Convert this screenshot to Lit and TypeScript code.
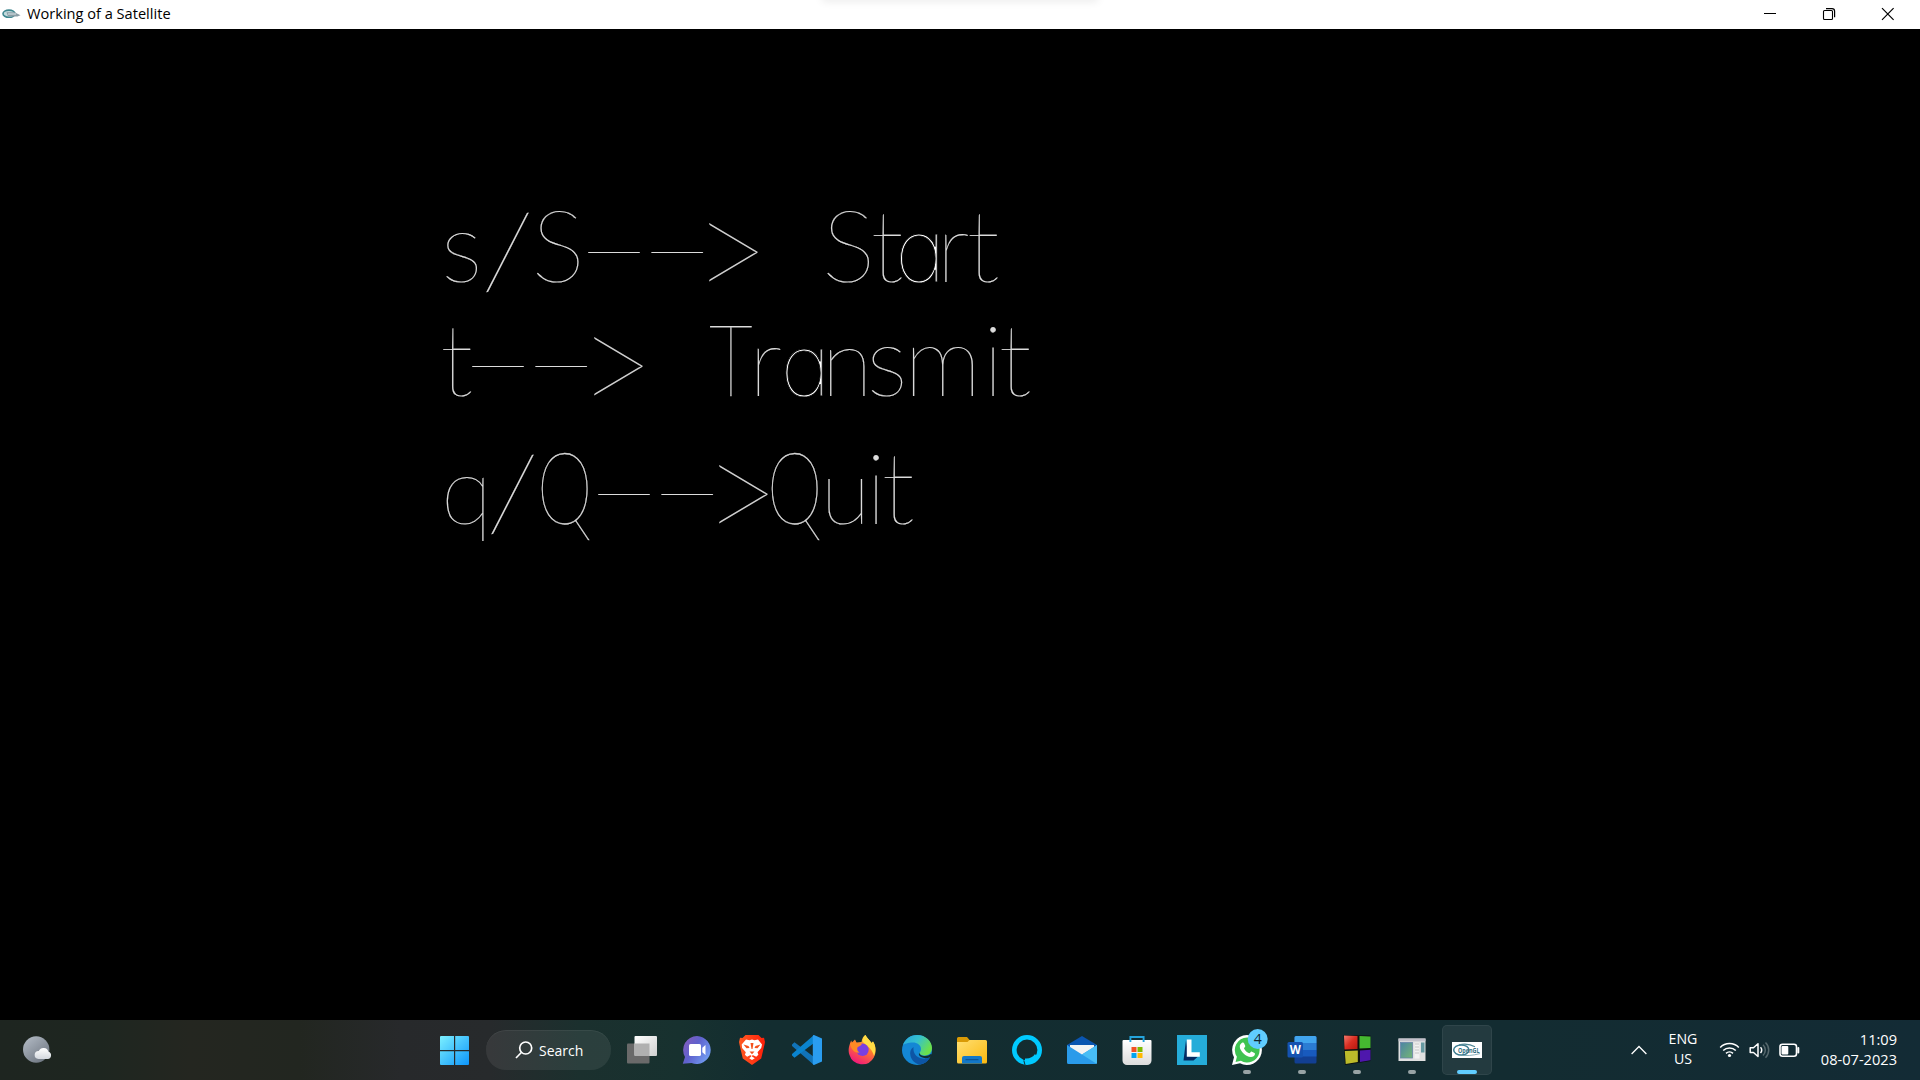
import { LitElement, html, svg, css, nothing, TemplateResult } from "lit";
import { customElement, property } from "lit/decorators.js";

/* One character: glyph, pen x, font size, baseline offset, optional alternate face. */
type Glyph = [string, number, number, number?, string?];
interface Run {
  glyphs: Glyph[];
}
/* A stretched run is drawn from its own origin with a horizontal scale. */
interface Stretched {
  text: string;
  x: number;
  kind: string;
}
interface Row {
  base: number;
  parts: (Run | Stretched)[];
}

const kinds: Record<string, { scale: number; dy: number }> = {
  dash: { scale: 2.33, dy: 0 },
  slash: { scale: 1.2, dy: 5.6 },
  arrow: { scale: 0.86, dy: 21.6 },
  capT: { scale: 0.76, dy: 0 },
  capQ: { scale: 0.7, dy: 0 },
};

const rows: Row[] = [
  {
    base: 282,
    parts: [
      { glyphs: [["s", 441, 99]] },
      { text: "/", x: 481, kind: "slash" },
      { glyphs: [["S", 531.5, 101]] },
      { text: "--", x: 571, kind: "dash" },
      { text: ">", x: 693, kind: "arrow" },
      { glyphs: [["S", 822, 101], ["t", 870.5, 101], ["a", 895, 87, 0, "round"], ["r", 936.5, 96], ["t", 966.5, 101]] },
    ],
  },
  {
    base: 396,
    parts: [
      { glyphs: [["t", 440, 101]] },
      { text: "--", x: 455, kind: "dash" },
      { text: ">", x: 578, kind: "arrow" },
      { text: "T", x: 709, kind: "capT" },
      {
        glyphs: [
          ["r", 749, 96], ["a", 780.5, 86, 0, "round"], ["n", 821.5, 94], ["s", 866.5, 98],
          ["m", 904, 98], ["i", 982.7, 99], ["t", 998.5, 101],
        ],
      },
    ],
  },
  {
    base: 524,
    parts: [
      { glyphs: [["q", 441, 94]] },
      { text: "/", x: 486, kind: "slash" },
      { text: "Q", x: 537, kind: "capQ" },
      { text: "--", x: 581, kind: "dash" },
      { text: ">", x: 703, kind: "arrow" },
      { text: "Q", x: 767, kind: "capQ" },
      { glyphs: [["u", 820.6, 92], ["i", 865.7, 99], ["t", 881.5, 101]] },
    ],
  },
];

@customElement("gl-canvas")
export class GlCanvas extends LitElement {
  static styles = css`
    :host { display: block; background: #000; overflow: hidden; }
    svg { display: block; }
    text { font-family: Lato, sans-serif; font-weight: 100; fill: #dcdcdc; stroke: #dcdcdc; stroke-width: 0.15px; white-space: pre; }
    .round { font-family: Inter, sans-serif; font-feature-settings: "cv11"; stroke: #000; stroke-width: 0.8px; fill: #fff; }
    .dash { font-size: 100px; letter-spacing: -9.8px; }
    .slash { font-size: 105px; }
    .arrow { font-size: 154px; stroke-width: 0; fill: #cfcfcf; }
    .capT, .capQ { font-size: 101px; stroke-width: 0.3px; }
  `;

  private part(p: Run | Stretched, base: number) {
    if ("glyphs" in p) {
      return svg`<text>${p.glyphs.map(
        ([ch, x, size, dy = 0, face]) =>
          svg`<tspan class=${face ?? nothing} x=${x} y=${base + dy} font-size=${size}>${ch}</tspan>`
      )}</text>`;
    }
    const k = kinds[p.kind];
    return svg`<text class=${p.kind} transform="translate(${p.x} ${base + k.dy}) scale(${k.scale} 1)">${p.text}</text>`;
  }

  render() {
    return html`<svg width="1920" height="991" viewBox="0 29 1920 991">
      ${rows.map((r) => r.parts.map((p) => this.part(p, r.base)))}
    </svg>`;
  }
}

@customElement("title-bar")
export class TitleBar extends LitElement {
  static styles = css`
    :host { display: flex; align-items: center; height: 29px; background: #fff; position: relative; overflow: hidden; }
    .logo { width: 19px; height: 12px; margin: 0 6px 2px 2px; }
    .title { flex: 1; font-size: 14.6px; line-height: 27px; padding-bottom: 2px; color: #000; }
    .controls { display: flex; height: 29px; }
    .controls svg { width: 58px; height: 29px; }
    .controls svg:nth-child(n + 2) { margin-left: 0.4px; }
    .shade { position: absolute; left: 822px; top: -6px; width: 276px; height: 6px; box-shadow: 0 1px 8px rgba(0, 0, 0, 0.1); }
  `;
  render() {
    return html`
      <svg class="logo" viewBox="0 0 19 12">
        <ellipse cx="7" cy="5.700" rx="6" ry="3.600" fill="#c3dadd" stroke="#3f8790" stroke-width="1.600" />
        <path d="M4.500 4.200h8l6 3-3 1.300H6z" fill="#8b9ea6" /><path d="M6 6h8" stroke="#dbe7ea" />
      </svg>
      <span class="title">Working of a Satellite</span>
      <div class="controls">
        <svg viewBox="0 0 58 29"><path d="M19 13.500h12" stroke="#000" /></svg>
        <svg viewBox="0 0 58 29" fill="none" stroke="#000">
          <rect x="19.500" y="10.500" width="9" height="9" rx="1" stroke-width="1.100" />
          <path d="M22 8.600h6a2.600 2.600 0 0 1 2.600 2.600v6" stroke-width="1.200" />
        </svg>
        <svg viewBox="0 0 58 29"><path d="M20 8.200l11.600 11.600M31.600 8.200L20 19.800" stroke="#000" stroke-width="1.200" /></svg>
      </div>
      <div class="shade"></div>`;
  }
}

const icons: Record<string, TemplateResult> = {
  taskview: svg`<rect x="0" y="8.5" width="22.5" height="20" rx="1" fill="#6a6a6a"/>
    <rect x="7.5" y="1" width="22.5" height="20" rx="1" fill="url(#tv)"/>
    <path d="M7.5 8.5h15V21h-14a1 1 0 0 1-1-1z" fill="#b0b0b0"/>`,
  chat: svg`<path d="M15 1a14 14 0 1 1-5.5 27L.8 28.7 3 22A14 14 0 0 1 15 1z" fill="url(#ch)"/>
    <rect x="7" y="9" width="12" height="12" rx="1.6" fill="#fff"/><path d="M20.3 12.7l3.2-2.8v10.2l-3.2-2.8z" fill="#fff"/>`,
  brave: svg`<path d="M8.500 0h13l3 3 2.500-.2L28 7l-.6 3-3.200 13.500L15 30l-9.200-6.500L2.600 10 2 7l1-4.200 2.500.2z" fill="url(#br)"/>
    <path d="M9 4.500l3.500.8 2.500-.7 2.500.7 3.500-.8 4 5-.8 3.500-3.700 4.200.9 2.600-2.200 2-3-1.600-1.200.4v1l2.800 1.600L15 25l-2.800-1.800 2.100-1.600v-1l-1.200-.4-3 1.600-2.200-2 .9-2.600-3.700-4.200L4.700 9.500z" fill="#fff"/>
    <path d="M6.500 9.500l5 1.500 1 2-3 .2zM23.500 9.500l-5 1.500-1 2 3 .2zM12.500 16.500h5L15 19.200zM13.500 8h3l-1 6h-1z" fill="#f4511e"/>`,
  vscode: svg`<path d="M2.500 7.200L22 22v8L.6 11.500a1.500 1.500 0 0 1 0-2.500z" fill="#1173b8"/>
    <path d="M2.500 22.800L22 8V0L.6 18.500a1.500 1.500 0 0 0 0 2.500z" fill="#0a84cf"/>
    <path d="M22 0l8 3.500v23L22 30c-.8 0-1.200-.6-1.200-1.400V1.400C20.800.6 21.200 0 22 0z" fill="#2a9df0"/>`,
  firefox: svg`<path d="M18.500 0c1 3 4.500 5 6 8l1.500-1.500c3.500 5 3.200 12 .8 16A13.300 13.300 0 0 1 2.500 20C.8 15 2 10.500 4.200 5.500l.8 2L8 4.500l1.500 3 5-.5c.5-3.500 2-6 4-7z" fill="url(#ff)"/>
    <path d="M18.500 0c1 3 4.500 5 6 8l1.500-1.500c3 4.500 3 10 1 14.500-1-4-3-7-6-9.500-2.500-2.500-5.500-4-5.500-6C16 3 17.200.8 18.500 0z" fill="#ffdc45"/>
    <circle cx="15.500" cy="14.800" r="6.200" fill="#7a3fe0"/>
    <path d="M3 8.500c3-1.800 5.500-1.800 7.500 0l4.500.3c-1 2-2.500 2.500-4.300 3.200-1 2-.4 4.500 2 5.500-5 1-8.700-3-9.700-9z" fill="#ff8a24"/>`,
  edge: svg`<circle cx="15" cy="15" r="15" fill="#1487d4"/>
    <path d="M1 10C3 4 8.500 0 15 0c9 0 15 6.500 15 13 0 5-3.500 7.500-7.500 7.500-3 0-5-1-5-2.200 0-1 1.500-1.500 1.500-4.300C19 10 15 7.500 11 7.500 6 7.500 2 9 1 10z" fill="url(#ed)"/>
    <path d="M11.500 12c-3 2-4 5-3 9s5 8.500 10 8.500c4.500-1 8-3.500 9.500-7.500-3 2-8 2.500-12 0-3.500-2-5-6-4.500-10z" fill="#0d55a5"/>
    <path d="M17.300 17.500c0 2 2.500 3.500 5.500 3.500 2.500 0 4.500-.7 6-2l1.500 1c-.8 1.300-1.500 2-2.800 2.500-3 1-6 .8-8.500-.5-2-1-2.700-3-1.700-4.500z" fill="#132c31"/>`,
  folder: svg`<path d="M0 3.500A1.500 1.500 0 0 1 1.500 2H10l3 3.500L10 9H0z" fill="#d99a06"/>
    <path d="M0 7h10.500l2-2H28.500A1.500 1.500 0 0 1 30 6.500V27a1.500 1.500 0 0 1-1.500 1.500h-27A1.500 1.500 0 0 1 0 27z" fill="url(#fo)"/>
    <path d="M5 28.500V23a2 2 0 0 1 2-2h16a2 2 0 0 1 2 2v5.500z" fill="#1378c8"/><path d="M8.500 24.700h13" stroke="#0a4d8c"/>`,
  alexa: svg`<circle cx="15" cy="15" r="12.700" fill="none" stroke="#00caff" stroke-width="4.600"/>
    <path d="M13 23.500c4 .6 8-1.300 10-4.500l1.500 2c-2.500 4-6.500 5.500-10.500 6l-.5 3.200h-.8z" fill="#00caff"/><path d="M11.800 25.500l1.400 5" stroke="#132c31" stroke-width="1"/>`,
  mail: svg`<path d="M0 10L15 1l15 9v8H0z" fill="#0a55b0"/><path d="M3 10h24v6l-12 8L3 16z" fill="#f3f3f3"/>
    <path d="M0 10l15 9.500L30 10v17.500a1.500 1.500 0 0 1-1.500 1.500h-27A1.500 1.500 0 0 1 0 27.500z" fill="#2a9bea"/>
    <path d="M30 10v17.500a1.500 1.500 0 0 1-.5 1.200L15 19.500z" fill="#48bdf5"/>`,
  store: svg`<path d="M.5 6A1 1 0 0 1 1.500 5h27a1 1 0 0 1 1 1v19.500A4.500 4.500 0 0 1 25 30H5A4.500 4.500 0 0 1 .5 25.500z" fill="url(#st)"/>
    <path d="M8.400 7V2h13.200v5" fill="none" stroke="#24a4dc" stroke-width="1.900"/>
    <path d="M9.500 12h5v5h-5z" fill="#f25022"/><path d="M15.500 12h5v5h-5z" fill="#7fba00"/><path d="M9.500 18h5v5h-5z" fill="#00a4ef"/><path d="M15.500 18h5v5h-5z" fill="#ffb900"/>`,
  lenovo: svg`<rect width="30" height="30" fill="#25acd9"/><path d="M9 5L6.500 25.500h10l4-3.500-9-1z" fill="#052a63"/>
    <path d="M9.800 4.500h4.700v12.700h8.300v4.500H9.800z" fill="#fff"/>`,
  whatsapp: svg`<path d="M15 0a15 15 0 1 1-7 28.300L0 30l2-7.700A15 15 0 0 1 15 0z" fill="#fff"/>
    <path d="M15.200 2.500a12.500 12.500 0 1 1-6.300 23.300L3.600 27l1.300-5.200A12.500 12.500 0 0 1 15.200 2.500z" fill="#3fc351"/>
    <path d="M10 7.800c1-.6 1.800-.3 2.100.5l1.200 2.800c.2.700-1.300 2-1.300 2.300 1.200 2.300 3 3.800 5.300 4.800.6 0 1.500-1.900 2.200-1.800l3 1.500c1 .5.300 2.500-.9 3.400-3 2-7.500-.4-9.800-2.500-2.300-2.200-4.300-5-4-7.500.1-1.500 1-2.800 2.200-3.500z" fill="#fff"/>
    <circle cx="25.700" cy="4" r="10" fill="#60cdff"/><text x="25.700" y="9" text-anchor="middle" font-size="14" fill="#10242c">4</text>`,
  word: svg`<rect x="7.500" y="1" width="22" height="27.500" rx="1.500" fill="#123f92"/><path d="M7.500 2.500A1.500 1.500 0 0 1 9 1h19a1.500 1.500 0 0 1 1.500 1.500V8h-22z" fill="#41a5ee"/>
    <path d="M7.500 8h22v7h-22z" fill="#2b7cd3"/><path d="M7.500 15h22v6.500h-22z" fill="#185abd"/>
    <rect x=".5" y="7" width="15.500" height="15.500" rx="1.500" fill="#1552b0"/><text x="8.200" y="18.800" text-anchor="middle" font-size="11.500" font-weight="700" fill="#fff">W</text>`,
  blocks: svg`<path d="M1.500 0L28.500 .5V26L3 30z" fill="#0b1010"/>
    <path d="M2 .5l13.500.5v13L2.500 14.500z" fill="url(#cr)"/><path d="M17.500 1l11 .5V13l-11 .5z" fill="#45b830"/>
    <path d="M2.800 16l13-.5v11.500L3.700 29z" fill="#bcbb2a"/><path d="M18 15.500l10.500-.7v10.500L18 27z" fill="#4e17ad"/>`,
  console: svg`<rect x="1.500" y="3.500" width="27" height="22.500" fill="#dfe0e0"/><path d="M1.500 3.500h27v2.800h-27z" fill="#c3c1cb"/>
    <rect x="3.500" y="7.500" width="12" height="15.500" fill="url(#co)" stroke="#6886a8" stroke-width=".8"/>
    <path d="M17.500 7.500h5v16h-5z" fill="#f2f2f2"/><path d="M18 9h4M18 12h4M18 15h4M18 18h4" stroke="#bbb" stroke-width=".8"/>
    <rect x="24" y="7.500" width="3.500" height="10" fill="#6598a0"/>`,
  opengl: svg`<rect y="7" width="30" height="16" fill="#fff"/>
    <ellipse cx="9.300" cy="15" rx="7.600" ry="5" fill="none" stroke="#3c7c90" stroke-width="1.500"/><path d="M7 9.800c6-1.300 12-.3 16 2" fill="none" stroke="#4f8795" stroke-width="1.200"/>
    <text x="6" y="17.800" font-size="6.600" font-weight="700" fill="#366f82" textLength="21.500" lengthAdjust="spacingAndGlyphs">OpenGL</text><path d="M7 19.800c7 1.500 14 .6 21-1.200" fill="none" stroke="#6c9ba7" stroke-width=".8"/>`,
};

const gradients = svg`<defs>
  <linearGradient id="tv" x2="1" y2="1"><stop stop-color="#fff"/><stop offset="1" stop-color="#cfd0d0"/></linearGradient>
  <linearGradient id="ch" x2="1" y2=".6"><stop stop-color="#8a5ab8"/><stop offset=".5" stop-color="#5f61cd"/><stop offset="1" stop-color="#709af0"/></linearGradient>
  <linearGradient id="br" x2="1"><stop stop-color="#ff5a22"/><stop offset="1" stop-color="#ff1f0a"/></linearGradient>
  <linearGradient id="ff" x1=".8" y1="0" x2=".3" y2="1"><stop stop-color="#ffde3f"/><stop offset=".45" stop-color="#ff7a2c"/><stop offset="1" stop-color="#f0157f"/></linearGradient>
  <linearGradient id="ed" x2="1" y2=".5"><stop stop-color="#27a5df"/><stop offset=".5" stop-color="#35c1cf"/><stop offset="1" stop-color="#6be04b"/></linearGradient>
  <linearGradient id="fo" x2="1" y2="1"><stop stop-color="#ffdf72"/><stop offset="1" stop-color="#fbb90f"/></linearGradient>
  <linearGradient id="st" y2="1" x2="0"><stop stop-color="#fff"/><stop offset="1" stop-color="#dcdcdc"/></linearGradient>
  <linearGradient id="cr" x2="1" y2="1"><stop stop-color="#f5796d"/><stop offset=".5" stop-color="#d92e22"/><stop offset="1" stop-color="#b81810"/></linearGradient>
  <linearGradient id="co" x2="1" y2="1"><stop stop-color="#4d84a5"/><stop offset="1" stop-color="#74b574"/></linearGradient>
</defs>`;

@customElement("task-item")
export class TaskItem extends LitElement {
  @property() name = "";
  @property() status = "";
  static styles = css`
    :host { display: grid; place-items: center; width: 55px; height: 60px; }
    .tile { display: grid; place-items: center; grid-template-rows: 45px 5px; width: 50px; height: 50px; box-sizing: border-box; }
    .tile.active { background: rgba(255, 255, 255, 0.07); border-radius: 5px; box-shadow: inset 0 0 0 1px rgba(255, 255, 255, 0.06); }
    svg { width: 30px; height: 30px; overflow: visible; margin-top: 5px; }
    text { font-family: "Open Sans", "Noto Sans", sans-serif; }
    .mark { width: 8px; height: 4px; margin-bottom: 2px; border-radius: 2px; background: #98a3a5; }
    .active .mark { width: 20px; background: #60cdff; }
  `;
  render() {
    return html`<div class="tile ${this.status}">
      <svg viewBox="0 0 30 30">${gradients}${icons[this.name]}</svg>
      ${this.status ? html`<span class="mark"></span>` : nothing}
    </div>`;
  }
}

const tasks: [string, string?][] = [
  ["taskview"], ["chat"], ["brave"], ["vscode"], ["firefox"], ["edge"], ["folder"], ["alexa"], ["mail"],
  ["store"], ["lenovo"], ["whatsapp", "open"], ["word", "open"], ["blocks", "open"], ["console", "open"], ["opengl", "active"],
];

@customElement("task-bar")
export class TaskBar extends LitElement {
  static styles = css`
    :host {
      display: flex; align-items: center; height: 60px; color: #fff;
      background: linear-gradient(90deg, #1e2520 0, #1e2620 100px, #242620 190px, #222620 300px, #27292b 400px, #272a2c 490px, #1b302e 580px, #17312f 680px, #132d30 760px, #132c31 1500px, #132b35 1920px);
    }
    .side { width: 432px; display: flex; }
    .weather { width: 29px; height: 28px; margin-left: 22.5px; }
    .start { width: 45px; height: 60px; }
    .search { display: flex; align-items: center; box-sizing: border-box; width: 125px; height: 40px; margin: 0 3px 0 9px; padding-left: 29px; gap: 6px; border-radius: 20px; background: rgba(255, 255, 255, 0.075); box-shadow: inset 0 1px 0 rgba(255, 255, 255, 0.06); font-size: 14px; }
    .search svg { width: 18px; height: 18px; }
    .apps { display: flex; flex: 1; }
    .tray { display: flex; align-items: center; padding-right: 23px; font-size: 14.6px; line-height: 20px; }
    .chev { width: 16px; height: 10px; margin-right: 20px; }
    .lang { width: 32px; text-align: center; font-size: 14.2px; margin-right: 20px; }
    .status { width: 82px; height: 20px; margin-right: 18px; }
    .clock { text-align: right; width: 78px; white-space: nowrap; }
    .clock, .lang { padding-bottom: 2px; }
  `;
  render() {
    return html`
      <div class="side">
        <svg class="weather" viewBox="0 0 29 28">
          <defs><linearGradient id="moon" x2=".8" y2="1"><stop stop-color="#b6bec8" /><stop offset="1" stop-color="#6d7580" /></linearGradient>
          <linearGradient id="cloud" x2="0" y2="1"><stop stop-color="#fff" /><stop offset="1" stop-color="#d3d8de" /></linearGradient></defs>
          <circle cx="13.200" cy="13.500" r="13.200" fill="url(#moon)" />
          <path d="M15.500 23a4 4 0 0 1 .3-8 5.200 5.200 0 0 1 9.700.8 3.700 3.700 0 0 1-.7 7.200z" fill="url(#cloud)" />
        </svg>
      </div>
      <svg class="start" viewBox="0 0 45 60">
        <defs><linearGradient id="win" gradientUnits="userSpaceOnUse" x1="8" y1="16" x2="37" y2="45"><stop stop-color="#7cf0ff" /><stop offset="1" stop-color="#0d95fb" /></linearGradient></defs>
        <path d="M9 16h13v14H8V17a1 1 0 0 1 1-1zM23.200 16H36a1 1 0 0 1 1 1v13H23.200zM8 31.200h14V45H9a1 1 0 0 1-1-1zM23.200 31.200H37V44a1 1 0 0 1-1 1H23.200z" fill="url(#win)" />
      </svg>
      <div class="search">
        <svg viewBox="0 0 18 18" fill="none" stroke="#fff" stroke-width="1.700"><circle cx="10.700" cy="7" r="6" /><path d="M6.300 11.500L1 17" /></svg>
        <span>Search</span>
      </div>
      <div class="apps">${tasks.map(([n, s]) => html`<task-item name=${n} status=${s ?? ""}></task-item>`)}</div>
      <div class="tray">
        <svg class="chev" viewBox="0 0 16 10"><path d="M.6 9L8 1.500 15.400 9" fill="none" stroke="#fff" stroke-width="1.300" /></svg>
        <div class="lang"><div>ENG</div><div>US</div></div>
        <svg class="status" viewBox="0 0 82 20" fill="none" stroke="#fff" stroke-width="1.500">
          <path d="M1.200 7.500a13 13 0 0 1 18.600 0M4.200 10.600a8.800 8.800 0 0 1 12.600 0M7 13.400a5 5 0 0 1 7 0" />
          <circle cx="10.500" cy="15.500" r="1.600" fill="#fff" stroke="none" />
          <path d="M31.200 7.700h3.300l4.500-4v12.800l-4.500-4h-3.300z" stroke-linejoin="round" />
          <path d="M41.500 7.200a4 4 0 0 1 0 5.800" /><path d="M44 4.700a7.400 7.400 0 0 1 0 10.800M46.500 2.500a10.600 10.600 0 0 1 0 15.200" stroke="#56686d" />
          <rect x="61" y="4.200" width="16.500" height="12" rx="2.500" stroke-width="1.600" />
          <rect x="62.500" y="6" width="6.800" height="8.500" rx="1" fill="#fff" stroke="none" /><path d="M79.300 8v4.500" stroke-width="2" stroke-linecap="round" />
        </svg>
        <div class="clock"><div>11:09</div><div>08-07-2023</div></div>
      </div>`;
  }
}

@customElement("app-root")
export class AppRoot extends LitElement {
  static styles = css`
    :host { display: flex; flex-direction: column; width: 1920px; height: 1080px; overflow: hidden; background: #000; font-family: "Open Sans", "Noto Sans", sans-serif; }
    gl-canvas { flex: 1; }
  `;
  render() {
    return html`<title-bar></title-bar><gl-canvas></gl-canvas><task-bar></task-bar>`;
  }
}
